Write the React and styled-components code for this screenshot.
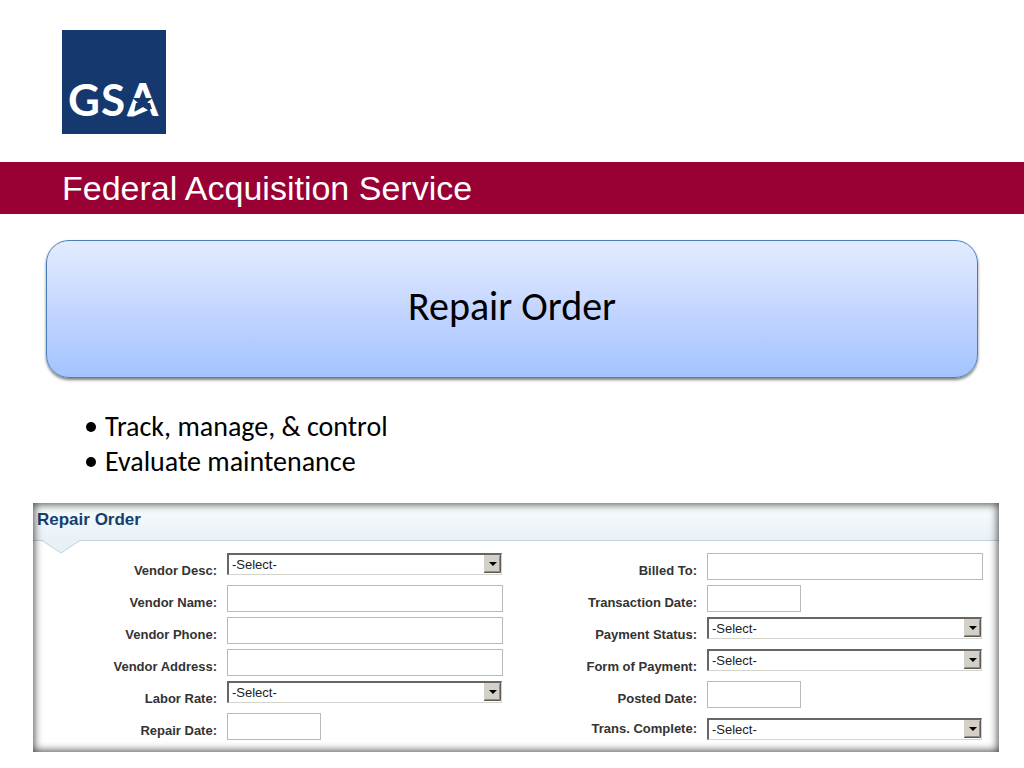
import React, { useId } from 'react'
import styled, { createGlobalStyle } from 'styled-components'

const GlobalStyle = createGlobalStyle`
  * {
    box-sizing: border-box;
  }
  body {
    margin: 0;
    background: #ffffff;
    color: #000000;
    font-family: "Liberation Sans", Arial, sans-serif;
  }
`
const Header = styled.header`
  padding: 30px 62px 28px;
`
const Logo = styled.svg`
  display: block;
  width: 104px;
  height: 104px;
`
const Banner = styled.div`
  padding: 0 62px;
  background-color: #990033;
  color: #ffffff;
  font-size: 34px;
  line-height: 52px;
`
const TitleCard = styled.div`
  display: flex;
  justify-content: center;
  align-items: center;
  min-height: 138px;
  margin: 26px 46px 0;
  padding-bottom: 4px;
  border: 1px solid #4a7ebb;
  border-radius: 23px;
  background: linear-gradient(#e3ecff, #cbdaff 40%, #bdd2ff 60%, #a3c4ff);
  box-shadow: 0 2px 3px rgba(0, 0, 0, 0.5);
`
const Title = styled.h1`
  margin: 0;
  font-family: Carlito, Calibri, Lato, sans-serif;
  font-size: 40px;
  font-weight: normal;
  line-height: 48px;
`
const BulletList = styled.ul`
  margin: 31px 0 24px;
  padding: 0 86px;
  list-style: none;
  font-family: Carlito, Calibri, Lato, sans-serif;
  font-size: 28px;
  line-height: 35px;
`
const Bullet = styled.li`
  display: flex;
  align-items: center;
  gap: 9px;

  &::before {
    content: "";
    width: 10px;
    height: 10px;
    border-radius: 50%;
    background: #000000;
  }
`
const Panel = styled.section`
  position: relative;
  margin: 0 25px 0 33px;
  padding-bottom: 7px;

  &::after {
    content: "";
    position: absolute;
    inset: 0;
    box-shadow: inset 0 0 8px 1px rgba(0, 0, 0, 0.75);
    pointer-events: none;
  }
`
const PanelHeader = styled.div`
  position: relative;
  height: 38px;
  padding: 0 4px;
  border-bottom: 1px solid #c3d2da;
  background: linear-gradient(#fafdfe, #e8f1f6);
`
const PanelTitle = styled.h2`
  margin: 0;
  color: #163f70;
  font-size: 17px;
  line-height: 34px;
`
const Pointer = styled.svg`
  position: absolute;
  top: 36px;
  left: 8px;
  width: 40px;
  height: 15px;
`
const Form = styled.form`
  display: grid;
  grid-template-columns: 47fr 48fr;
  padding: 12px 16px 0 0;
`
const Row = styled.div`
  display: flex;
  justify-content: flex-end;
  align-items: ${props => props.$low ? 'center' : 'flex-start'};
  gap: 10px;
  height: 32px;
`
const Label = styled.label`
  color: #333333;
  font-size: 13px;
  font-weight: bold;
  line-height: 36px;
`
const Field = styled.div`
  width: 276px;
`
const TextInput = styled.input`
  display: block;
  width: ${props => props.$short ? '94px' : '100%'};
  height: 27px;
  padding: 0 4px;
  border: 1px solid #b9b9b9;
  background: #ffffff;
  font: inherit;
  font-size: 13px;
`
const SelectBox = styled.div`
  position: relative;
  width: 275px;
  height: 22px;
  border: 1px solid #d6d3ce;
  border-top: 2px solid #666666;
  border-left: 2px solid #666666;
`
const Select = styled.select`
  display: block;
  width: 100%;
  height: 19px;
  padding: 0 20px 0 3px;
  border: 0;
  appearance: none;
  background: #ffffff;
  color: #222222;
  font-family: inherit;
  font-size: 13px;
  line-height: 19px;
`
const Arrow = styled.svg`
  position: absolute;
  top: 0;
  right: 0;
  width: 17px;
  height: 18px;
  pointer-events: none;
`

const leftFields = [
  { label: 'Vendor Desc:', type: 'select' },
  { label: 'Vendor Name:', type: 'text' },
  { label: 'Vendor Phone:', type: 'text' },
  { label: 'Vendor Address:', type: 'text' },
  { label: 'Labor Rate:', type: 'select' },
  { label: 'Repair Date:', type: 'date' },
]
const rightFields = [
  { label: 'Billed To:', type: 'text' },
  { label: 'Transaction Date:', type: 'date' },
  { label: 'Payment Status:', type: 'select' },
  { label: 'Form of Payment:', type: 'select' },
  { label: 'Posted Date:', type: 'date' },
  { label: 'Trans. Complete:', type: 'select', low: true },
]

function GsaLogo() {
  return (
    <Logo viewBox="0 0 104 104" role="img" aria-label="GSA">
      <rect width="104" height="104" fill="#15396f" />
      <g fill="#ffffff" fontFamily="Lato, sans-serif" fontWeight="bold" fontSize="45">
        <text x="6" y="86" fontSize="44">G</text>
        <text x="39" y="86" fontSize="44">S</text>
        <text x="65" y="86">A</text>
      </g>
      {/* star over the crossbar, with the stripe that trails from it */}
      <path d="M74 73h14l2 6-18 3z" fill="#15396f" />
      <path d="M81 62l2.300 6h7.200l-5.300 4.600 2.800 8.400-7-4.600-7.500 5 2.300-8.600-5.300-4.800h7.800z" fill="#15396f" />
      <path d="M65.500 86.500l6-9 1.200 4.200 8.300-4.700 5 3.200-14.500 6.300z" fill="#ffffff" />
    </Logo>
  )
}

function SelectField({ id }) {
  return (
    <SelectBox>
      <Select id={id}>
        <option>-Select-</option>
      </Select>
      <Arrow viewBox="0 0 17 18">
        <rect width="17" height="18" fill="#d4d0c8" />
        <path d="M0 17.5h16.5V0" fill="none" stroke="#5a5a5a" />
        <path d="M1 16.5h14.5V1" fill="none" stroke="#8f8c86" />
        <path d="M5 7h8l-4 4z" fill="#000000" />
      </Arrow>
    </SelectBox>
  )
}

function FormRow({ field }) {
  const id = useId()

  return (
    <Row $low={field.low}>
      <Label htmlFor={id}>{field.label}</Label>
      <Field>
        {field.type === 'select'
          ? <SelectField id={id} />
          : <TextInput id={id} type='text' $short={field.type === 'date'} />}
      </Field>
    </Row>
  )
}

function App() {
  return (
    <>
      <GlobalStyle />
      <Header>
        <GsaLogo />
      </Header>
      <Banner>Federal Acquisition Service</Banner>
      <main>
        <TitleCard>
          <Title>Repair Order</Title>
        </TitleCard>
        <BulletList>
          <Bullet>Track, manage, &amp; control</Bullet>
          <Bullet>Evaluate maintenance</Bullet>
        </BulletList>
        <Panel>
          <PanelHeader>
            <PanelTitle>Repair Order</PanelTitle>
            <Pointer viewBox="0 0 40 15">
              <path d="M1 0v1.5L20 14 39 1.5V0z" fill="#e8f1f6" />
              <path d="M1 1.5L20 14 39 1.5" fill="none" stroke="#c3d2da" />
            </Pointer>
          </PanelHeader>
          <Form>
            <div>
              {leftFields.map(field => <FormRow key={field.label} field={field} />)}
            </div>
            <div>
              {rightFields.map(field => <FormRow key={field.label} field={field} />)}
            </div>
          </Form>
        </Panel>
      </main>
    </>
  )
}

export default App
